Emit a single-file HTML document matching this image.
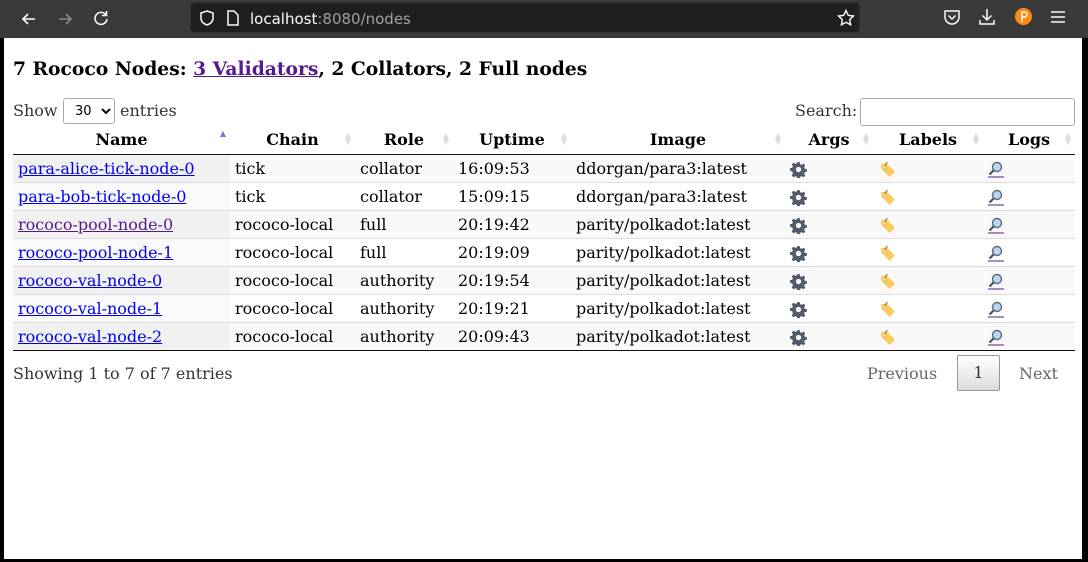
<!DOCTYPE html>
<html><head><meta charset="utf-8">
<style>
*{box-sizing:border-box;margin:0;padding:0}
html,body{width:1088px;height:562px;overflow:hidden;background:#000;font-family:"DejaVu Serif","Liberation Serif",serif}
#chrome{position:absolute;left:0;top:0;width:1088px;height:38px;background:#3a3a3a}
#url{position:absolute;left:190px;top:2px;width:670px;height:31px;background:#1f1f1f;border-radius:5px;border:1px solid #2e2e2e}
#urltext{position:absolute;left:59px;top:7px;font-family:"DejaVu Sans","Liberation Sans",sans-serif;font-size:15px;color:#fbfbfe}
#urltext span{color:#a0a0a6}
#page{position:absolute;left:4px;top:38px;width:1078px;height:521px;background:#fff;color:#000}
h1{position:absolute;left:9px;top:20px;font-size:18.7px;font-weight:bold;white-space:nowrap}
h1 a{color:#551a8b}
.t{position:absolute;font-size:16px;color:#333;white-space:nowrap}
select{position:absolute;left:59px;top:60px;width:52px;height:26px;border:1px solid #aaa;border-radius:3px;background:#fff;font-size:13px;font-family:"DejaVu Sans",sans-serif;padding-left:7px}
#search{position:absolute;left:856px;top:60px;width:215px;height:28px;border:1px solid #aaa;border-radius:3px}
table{position:absolute;left:9px;top:88px;width:1062px;border-collapse:collapse;font-size:16px}
th{height:28px;font-weight:bold;text-align:center;border-bottom:1.5px solid #111;position:relative;padding:0}
th .s{position:absolute;right:4px;top:7px;font-size:8px;line-height:6px;color:#ddd;font-family:"DejaVu Sans",sans-serif}
td{height:28px;padding:0 0 0 5px;border-top:1px solid #ddd;white-space:nowrap}
tr.o td{background:#f9f9f9}
tr.o td.n{background:#f1f1f1}
tr.e td{background:#fff}
tr.e td.n{background:#fafafa}
tbody tr:first-child td{border-top:none}
tbody tr:last-child td{border-bottom:1px solid #111}
td a{color:#0000ee}
td a.v{color:#551a8b}
.ic{display:inline-block;vertical-align:middle}
</style></head><body>
<div id="chrome">
<svg style="position:absolute;left:20px;top:10px" width="18" height="18" viewBox="0 0 18 18" fill="none" stroke="#fbfbfe" stroke-width="1.6"><path d="M15 9H3M8 4L3 9l5 5"/></svg>
<svg style="position:absolute;left:56px;top:10px" width="18" height="18" viewBox="0 0 18 18" fill="none" stroke="#8a8a8a" stroke-width="1.6"><path d="M3 9h12M10 4l5 5-5 5"/></svg>
<svg style="position:absolute;left:92px;top:9px" width="18" height="18" viewBox="0 0 18 18" fill="none" stroke="#fbfbfe" stroke-width="1.6"><path d="M14 6A6 6 0 1 0 15 10"/><path d="M14.5 2v4.5H10"/></svg>
<div id="url">
<svg style="position:absolute;left:7px;top:6px" width="18" height="18" viewBox="0 0 18 18" fill="none" stroke="#fbfbfe" stroke-width="1.5"><path d="M9 2l6 2v5c0 4-3 6-6 7-3-1-6-3-6-7V4z"/></svg>
<svg style="position:absolute;left:34px;top:6px" width="16" height="18" viewBox="0 0 16 18" fill="none" stroke="#fbfbfe" stroke-width="1.5"><path d="M3 2h6l4 4v10H3z"/></svg>
<div id="urltext">localhost<span>:8080/nodes</span></div>
<svg style="position:absolute;left:646px;top:6px" width="18" height="18" viewBox="0 0 18 18" fill="none" stroke="#fbfbfe" stroke-width="1.4"><path d="M9 1.5l2.3 4.8 5.2.7-3.8 3.6.9 5.2L9 13.3l-4.6 2.5.9-5.2L1.5 7l5.2-.7z"/></svg>
</div>
<svg style="position:absolute;left:943px;top:8px" width="18" height="18" viewBox="0 0 18 18" fill="none" stroke="#fbfbfe" stroke-width="1.5"><path d="M2 3h14v6a7 7 0 0 1-14 0z"/><path d="M5.5 7.5L9 11l3.5-3.5"/></svg>
<svg style="position:absolute;left:978px;top:8px" width="18" height="18" viewBox="0 0 18 18" fill="none" stroke="#fbfbfe" stroke-width="1.5"><path d="M9 1v11M4.5 7.5L9 12l4.5-4.5M2 12v4h14v-4"/></svg>
<div style="position:absolute;left:1015px;top:8px;width:17px;height:17px;border-radius:50%;background:#ff8a10"></div>
<svg style="position:absolute;left:1015px;top:8px" width="17" height="17" viewBox="0 0 17 17" fill="none" stroke="#fff" stroke-width="1.5"><path d="M7 14V4h2.5a2.5 2.5 0 0 1 0 5H7"/></svg>
<svg style="position:absolute;left:1050px;top:10px" width="16" height="14" viewBox="0 0 16 14" stroke="#fbfbfe" stroke-width="1.5"><path d="M1 2h14M1 7h14M1 12h14"/></svg>
</div>
<div id="page">
<h1>7 Rococo Nodes: <a href="#">3 Validators</a>, 2 Collators, 2 Full nodes</h1>
<div class="t" style="left:9px;top:63px">Show</div>
<select><option>30</option></select>
<div class="t" style="left:116px;top:63px">entries</div>
<div class="t" style="left:791px;top:63px">Search:</div>
<div id="search"></div>
<table>
<colgroup><col style="width:217px"><col style="width:125px"><col style="width:98px"><col style="width:118px"><col style="width:214px"><col style="width:88px"><col style="width:110px"><col style="width:92px"></colgroup>
<thead><tr>
<th>Name<span class="s" style="color:#6f7cd6;top:5px">▲</span></th>
<th>Chain<span class="s">▲<br>▼</span></th>
<th>Role<span class="s">▲<br>▼</span></th>
<th>Uptime<span class="s">▲<br>▼</span></th>
<th>Image<span class="s">▲<br>▼</span></th>
<th>Args<span class="s">▲<br>▼</span></th>
<th>Labels<span class="s">▲<br>▼</span></th>
<th>Logs<span class="s">▲<br>▼</span></th>
</tr></thead>
<tbody>
<tr class="o"><td class="n"><a href="#">para-alice-tick-node-0</a></td><td>tick</td><td>collator</td><td>16:09:53</td><td>ddorgan/para3:latest</td><td class="g"></td><td class="l"></td><td class="z"></td></tr>
<tr class="e"><td class="n"><a href="#">para-bob-tick-node-0</a></td><td>tick</td><td>collator</td><td>15:09:15</td><td>ddorgan/para3:latest</td><td class="g"></td><td class="l"></td><td class="z"></td></tr>
<tr class="o"><td class="n"><a class="v" href="#">rococo-pool-node-0</a></td><td>rococo-local</td><td>full</td><td>20:19:42</td><td>parity/polkadot:latest</td><td class="g"></td><td class="l"></td><td class="z"></td></tr>
<tr class="e"><td class="n"><a href="#">rococo-pool-node-1</a></td><td>rococo-local</td><td>full</td><td>20:19:09</td><td>parity/polkadot:latest</td><td class="g"></td><td class="l"></td><td class="z"></td></tr>
<tr class="o"><td class="n"><a href="#">rococo-val-node-0</a></td><td>rococo-local</td><td>authority</td><td>20:19:54</td><td>parity/polkadot:latest</td><td class="g"></td><td class="l"></td><td class="z"></td></tr>
<tr class="e"><td class="n"><a href="#">rococo-val-node-1</a></td><td>rococo-local</td><td>authority</td><td>20:19:21</td><td>parity/polkadot:latest</td><td class="g"></td><td class="l"></td><td class="z"></td></tr>
<tr class="o"><td class="n"><a href="#">rococo-val-node-2</a></td><td>rococo-local</td><td>authority</td><td>20:09:43</td><td>parity/polkadot:latest</td><td class="g"></td><td class="l"></td><td class="z"></td></tr>
</tbody></table>
<div class="t" style="left:9px;top:326px">Showing 1 to 7 of 7 entries</div>
<div class="t" style="left:863px;top:326px;color:#666">Previous</div>
<div style="position:absolute;left:953px;top:317px;width:43px;height:36px;border:1px solid #979797;border-radius:2px;background:linear-gradient(#fff,#dcdcdc);text-align:center;line-height:34px;font-size:16px;color:#333">1</div>
<div class="t" style="left:1015px;top:326px;color:#666">Next</div>
</div>
<script>
var gear='<svg class="ic" width="17" height="17" viewBox="0 0 16 16"><path fill="#505c6a" d="M6.8 1h2.4l.4 2 1.4.6 1.7-1.1 1.7 1.7-1.1 1.7.6 1.4 2 .4v2.4l-2 .4-.6 1.4 1.1 1.7-1.7 1.7-1.7-1.1-1.4.6-.4 2H6.8l-.4-2-1.4-.6-1.7 1.1-1.7-1.7 1.1-1.7L2.1 9.6 0 9.2V6.8l2.1-.4.6-1.4-1.1-1.7 1.7-1.7 1.7 1.1 1.4-.6zM8 5.5a2.5 2.5 0 1 0 0 5 2.5 2.5 0 0 0 0-5z"/></svg>';
var tag='<svg class="ic" width="17" height="17" viewBox="0 0 16 16"><path fill="#f8c95f" d="M2 3l5-1 8 8-5 5-8-8z"/><circle cx="5" cy="5" r="1" fill="#fff"/><path d="M5 5l3-4" stroke="#b5653c" stroke-width="1"/></svg>';
var mag='<svg class="ic" width="18" height="18" viewBox="0 0 18 18"><circle cx="10" cy="7" r="4.5" fill="#bcd6f0" stroke="#5a6b80" stroke-width="1.4"/><path d="M7 10l-4.5 4.5" stroke="#4a5566" stroke-width="2.2"/><path d="M1 17h16" stroke="#551a8b" stroke-width="1"/></svg>';
document.querySelectorAll('td.g').forEach(function(e){e.style.paddingLeft='5px';e.innerHTML=gear});
document.querySelectorAll('td.l').forEach(function(e){e.style.paddingLeft='6px';e.innerHTML=tag});
document.querySelectorAll('td.z').forEach(function(e){e.style.paddingLeft='4px';e.innerHTML=mag});
</script>
</body></html>
